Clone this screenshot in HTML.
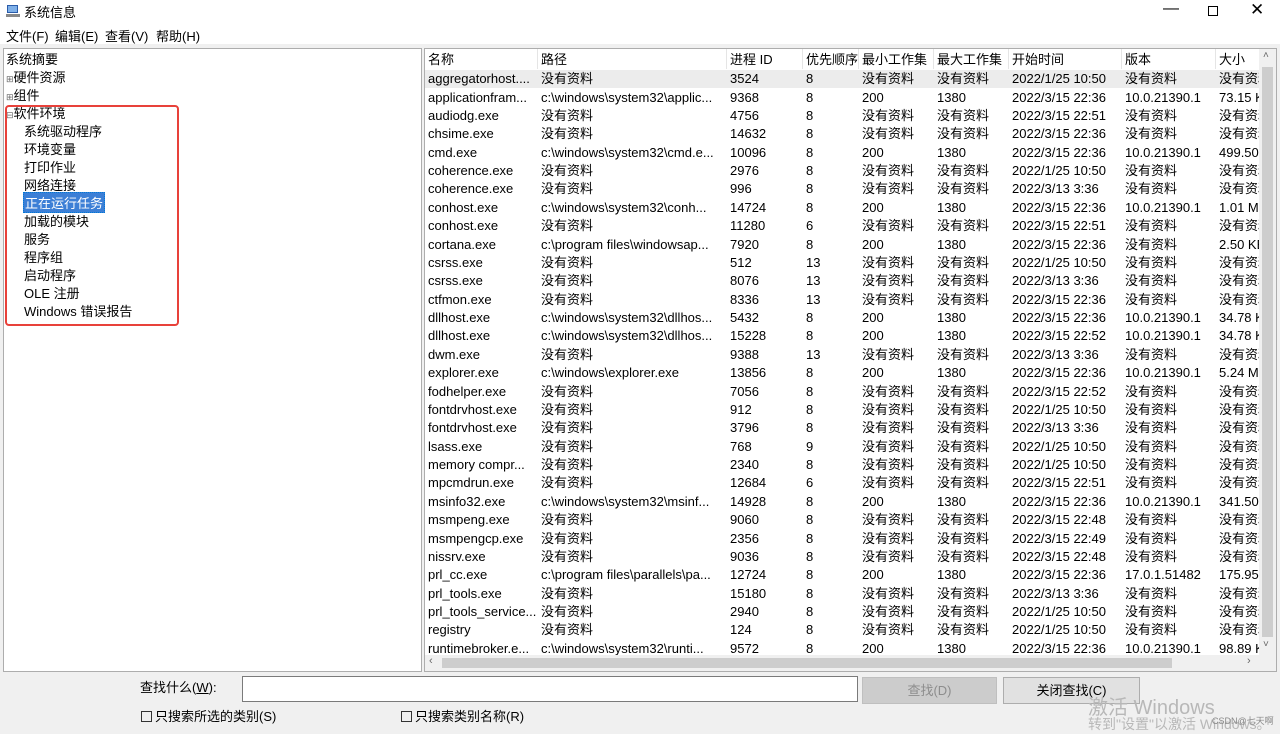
<!DOCTYPE html>
<html><head><meta charset="utf-8"><style>
*{margin:0;padding:0;box-sizing:border-box}
body{width:1280px;height:729px;background:#f0f0f0;font-family:"Liberation Sans","Noto Sans CJK SC",sans-serif;font-size:13px;color:#000;position:relative;overflow:hidden}
.abs{position:absolute;white-space:nowrap}
#title{left:0;top:0;width:1280px;height:24px;background:#fff}
#menu{left:0;top:24px;width:1280px;height:20px;background:#fff}
#left{left:3px;top:48px;width:419px;height:624px;background:#fff;border:1px solid #adadad}
#right{left:424px;top:48px;width:853px;height:624px;background:#fff;border:1px solid #adadad;overflow:hidden}
.t{position:absolute;left:0;white-space:nowrap}
table{border-collapse:collapse;position:absolute;left:0;top:21px;table-layout:fixed}
td{height:18.38px;padding:0 0 0 3px;white-space:nowrap;overflow:hidden;text-overflow:clip;font-size:13px;line-height:18px}
tr:first-child td{background:#ececec}
.hd{position:absolute;top:0;height:20px;font-size:13px;line-height:21px;padding-left:3px;border-right:1px solid #e5e5e5}
.btn{position:absolute;height:27px;border:1px solid #adadad;background:#e1e1e1;text-align:center;line-height:25px}
.cb{display:inline-block;width:11px;height:11px;border:1px solid #333;vertical-align:-1px;margin-right:3px}
</style></head><body>
<div id="title" class="abs">
<svg class="abs" style="left:6px;top:4px" width="14" height="14"><rect x="1" y="1" width="11" height="8" fill="#2a5caa"/><rect x="2" y="2" width="9" height="6" fill="#7fb0e8"/><rect x="0" y="10" width="14" height="3" fill="#888"/></svg>
<span class="abs" style="left:24px;top:2px;font-size:13px">系统信息</span>
<span class="abs" style="left:1163px;top:0px;font-size:16px">—</span>
<span class="abs" style="left:1208px;top:6px;width:10px;height:10px;border:1px solid #000"></span>
<span class="abs" style="left:1250px;top:0px;font-size:17px">✕</span>
</div>
<div id="menu" class="abs"><span class="abs" style="left:6px;top:2px">文件(F)</span><span class="abs" style="left:55px;top:2px">编辑(E)</span><span class="abs" style="left:105px;top:2px">查看(V)</span><span class="abs" style="left:156px;top:2px">帮助(H)</span></div>
<div id="left" class="abs">
<div class="t" style="left:2px;top:0px">系统摘要</div>
<div class="t" style="left:2px;top:18px"><span style="font-size:9px;color:#666">⊞</span>硬件资源</div>
<div class="t" style="left:2px;top:36px"><span style="font-size:9px;color:#666">⊞</span>组件</div>
<div class="t" style="left:2px;top:54px"><span style="font-size:9px;color:#666">⊟</span>软件环境</div>
<div class="t" style="left:20px;top:72px">系统驱动程序</div>
<div class="t" style="left:20px;top:90px">环境变量</div>
<div class="t" style="left:20px;top:108px">打印作业</div>
<div class="t" style="left:20px;top:126px">网络连接</div>
<div class="t" style="left:19px;top:143px;border:1px dotted #0078d7;padding:0 1px;background:#3c7fd6;color:#fff">正在运行任务</div>
<div class="t" style="left:20px;top:162px">加载的模块</div>
<div class="t" style="left:20px;top:180px">服务</div>
<div class="t" style="left:20px;top:198px">程序组</div>
<div class="t" style="left:20px;top:216px">启动程序</div>
<div class="t" style="left:20px;top:234px">OLE 注册</div>
<div class="t" style="left:20px;top:252px">Windows 错误报告</div>
<div class="t" style="left:1px;top:56px;width:174px;height:221px;border:2px solid #e8413a;border-radius:4px"></div>
</div>
<div id="right" class="abs">
<div class="hd" style="left:0;width:113px">名称</div><div class="hd" style="left:113px;width:189px">路径</div><div class="hd" style="left:302px;width:76px">进程 ID</div><div class="hd" style="left:378px;width:56px">优先顺序</div><div class="hd" style="left:434px;width:75px">最小工作集</div><div class="hd" style="left:509px;width:75px">最大工作集</div><div class="hd" style="left:584px;width:113px">开始时间</div><div class="hd" style="left:697px;width:94px">版本</div><div class="hd" style="left:791px;width:45px">大小</div>
<table><colgroup><col style="width:113px"><col style="width:189px"><col style="width:76px"><col style="width:56px"><col style="width:75px"><col style="width:75px"><col style="width:113px"><col style="width:94px"><col style="width:43px"></colgroup>
<tr><td>aggregatorhost....</td><td>没有资料</td><td>3524</td><td>8</td><td>没有资料</td><td>没有资料</td><td>2022/1/25 10:50</td><td>没有资料</td><td>没有资料</td></tr>
<tr><td>applicationfram...</td><td>c:\windows\system32\applic...</td><td>9368</td><td>8</td><td>200</td><td>1380</td><td>2022/3/15 22:36</td><td>10.0.21390.1</td><td>73.15 KB</td></tr>
<tr><td>audiodg.exe</td><td>没有资料</td><td>4756</td><td>8</td><td>没有资料</td><td>没有资料</td><td>2022/3/15 22:51</td><td>没有资料</td><td>没有资料</td></tr>
<tr><td>chsime.exe</td><td>没有资料</td><td>14632</td><td>8</td><td>没有资料</td><td>没有资料</td><td>2022/3/15 22:36</td><td>没有资料</td><td>没有资料</td></tr>
<tr><td>cmd.exe</td><td>c:\windows\system32\cmd.e...</td><td>10096</td><td>8</td><td>200</td><td>1380</td><td>2022/3/15 22:36</td><td>10.0.21390.1</td><td>499.50</td></tr>
<tr><td>coherence.exe</td><td>没有资料</td><td>2976</td><td>8</td><td>没有资料</td><td>没有资料</td><td>2022/1/25 10:50</td><td>没有资料</td><td>没有资料</td></tr>
<tr><td>coherence.exe</td><td>没有资料</td><td>996</td><td>8</td><td>没有资料</td><td>没有资料</td><td>2022/3/13 3:36</td><td>没有资料</td><td>没有资料</td></tr>
<tr><td>conhost.exe</td><td>c:\windows\system32\conh...</td><td>14724</td><td>8</td><td>200</td><td>1380</td><td>2022/3/15 22:36</td><td>10.0.21390.1</td><td>1.01 MB</td></tr>
<tr><td>conhost.exe</td><td>没有资料</td><td>11280</td><td>6</td><td>没有资料</td><td>没有资料</td><td>2022/3/15 22:51</td><td>没有资料</td><td>没有资料</td></tr>
<tr><td>cortana.exe</td><td>c:\program files\windowsap...</td><td>7920</td><td>8</td><td>200</td><td>1380</td><td>2022/3/15 22:36</td><td>没有资料</td><td>2.50 KB</td></tr>
<tr><td>csrss.exe</td><td>没有资料</td><td>512</td><td>13</td><td>没有资料</td><td>没有资料</td><td>2022/1/25 10:50</td><td>没有资料</td><td>没有资料</td></tr>
<tr><td>csrss.exe</td><td>没有资料</td><td>8076</td><td>13</td><td>没有资料</td><td>没有资料</td><td>2022/3/13 3:36</td><td>没有资料</td><td>没有资料</td></tr>
<tr><td>ctfmon.exe</td><td>没有资料</td><td>8336</td><td>13</td><td>没有资料</td><td>没有资料</td><td>2022/3/15 22:36</td><td>没有资料</td><td>没有资料</td></tr>
<tr><td>dllhost.exe</td><td>c:\windows\system32\dllhos...</td><td>5432</td><td>8</td><td>200</td><td>1380</td><td>2022/3/15 22:36</td><td>10.0.21390.1</td><td>34.78 KB</td></tr>
<tr><td>dllhost.exe</td><td>c:\windows\system32\dllhos...</td><td>15228</td><td>8</td><td>200</td><td>1380</td><td>2022/3/15 22:52</td><td>10.0.21390.1</td><td>34.78 KB</td></tr>
<tr><td>dwm.exe</td><td>没有资料</td><td>9388</td><td>13</td><td>没有资料</td><td>没有资料</td><td>2022/3/13 3:36</td><td>没有资料</td><td>没有资料</td></tr>
<tr><td>explorer.exe</td><td>c:\windows\explorer.exe</td><td>13856</td><td>8</td><td>200</td><td>1380</td><td>2022/3/15 22:36</td><td>10.0.21390.1</td><td>5.24 MB</td></tr>
<tr><td>fodhelper.exe</td><td>没有资料</td><td>7056</td><td>8</td><td>没有资料</td><td>没有资料</td><td>2022/3/15 22:52</td><td>没有资料</td><td>没有资料</td></tr>
<tr><td>fontdrvhost.exe</td><td>没有资料</td><td>912</td><td>8</td><td>没有资料</td><td>没有资料</td><td>2022/1/25 10:50</td><td>没有资料</td><td>没有资料</td></tr>
<tr><td>fontdrvhost.exe</td><td>没有资料</td><td>3796</td><td>8</td><td>没有资料</td><td>没有资料</td><td>2022/3/13 3:36</td><td>没有资料</td><td>没有资料</td></tr>
<tr><td>lsass.exe</td><td>没有资料</td><td>768</td><td>9</td><td>没有资料</td><td>没有资料</td><td>2022/1/25 10:50</td><td>没有资料</td><td>没有资料</td></tr>
<tr><td>memory compr...</td><td>没有资料</td><td>2340</td><td>8</td><td>没有资料</td><td>没有资料</td><td>2022/1/25 10:50</td><td>没有资料</td><td>没有资料</td></tr>
<tr><td>mpcmdrun.exe</td><td>没有资料</td><td>12684</td><td>6</td><td>没有资料</td><td>没有资料</td><td>2022/3/15 22:51</td><td>没有资料</td><td>没有资料</td></tr>
<tr><td>msinfo32.exe</td><td>c:\windows\system32\msinf...</td><td>14928</td><td>8</td><td>200</td><td>1380</td><td>2022/3/15 22:36</td><td>10.0.21390.1</td><td>341.50</td></tr>
<tr><td>msmpeng.exe</td><td>没有资料</td><td>9060</td><td>8</td><td>没有资料</td><td>没有资料</td><td>2022/3/15 22:48</td><td>没有资料</td><td>没有资料</td></tr>
<tr><td>msmpengcp.exe</td><td>没有资料</td><td>2356</td><td>8</td><td>没有资料</td><td>没有资料</td><td>2022/3/15 22:49</td><td>没有资料</td><td>没有资料</td></tr>
<tr><td>nissrv.exe</td><td>没有资料</td><td>9036</td><td>8</td><td>没有资料</td><td>没有资料</td><td>2022/3/15 22:48</td><td>没有资料</td><td>没有资料</td></tr>
<tr><td>prl_cc.exe</td><td>c:\program files\parallels\pa...</td><td>12724</td><td>8</td><td>200</td><td>1380</td><td>2022/3/15 22:36</td><td>17.0.1.51482</td><td>175.95</td></tr>
<tr><td>prl_tools.exe</td><td>没有资料</td><td>15180</td><td>8</td><td>没有资料</td><td>没有资料</td><td>2022/3/13 3:36</td><td>没有资料</td><td>没有资料</td></tr>
<tr><td>prl_tools_service...</td><td>没有资料</td><td>2940</td><td>8</td><td>没有资料</td><td>没有资料</td><td>2022/1/25 10:50</td><td>没有资料</td><td>没有资料</td></tr>
<tr><td>registry</td><td>没有资料</td><td>124</td><td>8</td><td>没有资料</td><td>没有资料</td><td>2022/1/25 10:50</td><td>没有资料</td><td>没有资料</td></tr>
<tr><td>runtimebroker.e...</td><td>c:\windows\system32\runti...</td><td>9572</td><td>8</td><td>200</td><td>1380</td><td>2022/3/15 22:36</td><td>10.0.21390.1</td><td>98.89 KB</td></tr>
</table>
<div class="abs" style="left:834px;top:0;width:17px;height:606px;background:#f0f0f0"><div style="position:absolute;left:3px;top:18px;width:11px;height:570px;background:#cdcdcd"></div><span style="position:absolute;left:4px;top:1px;font-size:10px;color:#666">˄</span><span style="position:absolute;left:4px;top:590px;font-size:10px;color:#666">˅</span></div>
<div class="abs" style="left:0;top:606px;width:851px;height:16px;background:#f0f0f0"><div style="position:absolute;left:17px;top:3px;width:730px;height:10px;background:#cdcdcd"></div><span style="position:absolute;left:4px;top:0;font-size:11px;color:#666">‹</span><span style="position:absolute;left:822px;top:0;font-size:11px;color:#666">›</span></div>
</div>
<span class="abs" style="left:140px;top:677px">查找什么(<u>W</u>):</span>
<div class="abs" style="left:242px;top:676px;width:616px;height:26px;background:#fff;border:1px solid #7a7a7a"></div>
<div class="btn" style="left:862px;top:677px;width:135px;color:#8d8d8d;background:#cccccc;border-color:#bfbfbf">查找(D)</div>
<div class="btn" style="left:1003px;top:677px;width:137px">关闭查找(C)</div>
<span class="abs" style="left:141px;top:706px"><span class="cb"></span>只搜索所选的类别(S)</span>
<span class="abs" style="left:401px;top:706px"><span class="cb"></span>只搜索类别名称(R)</span>
<span class="abs" style="left:1088px;top:691px;font-size:20px;color:#b8b8b8">激活 Windows</span>
<span class="abs" style="left:1088px;top:714px;font-size:14px;color:#b8b8b8">转到"设置"以激活 Windows。</span>
<span class="abs" style="left:1212px;top:714px;font-size:9px;color:#888">CSDN@七天啊</span>
</body></html>
